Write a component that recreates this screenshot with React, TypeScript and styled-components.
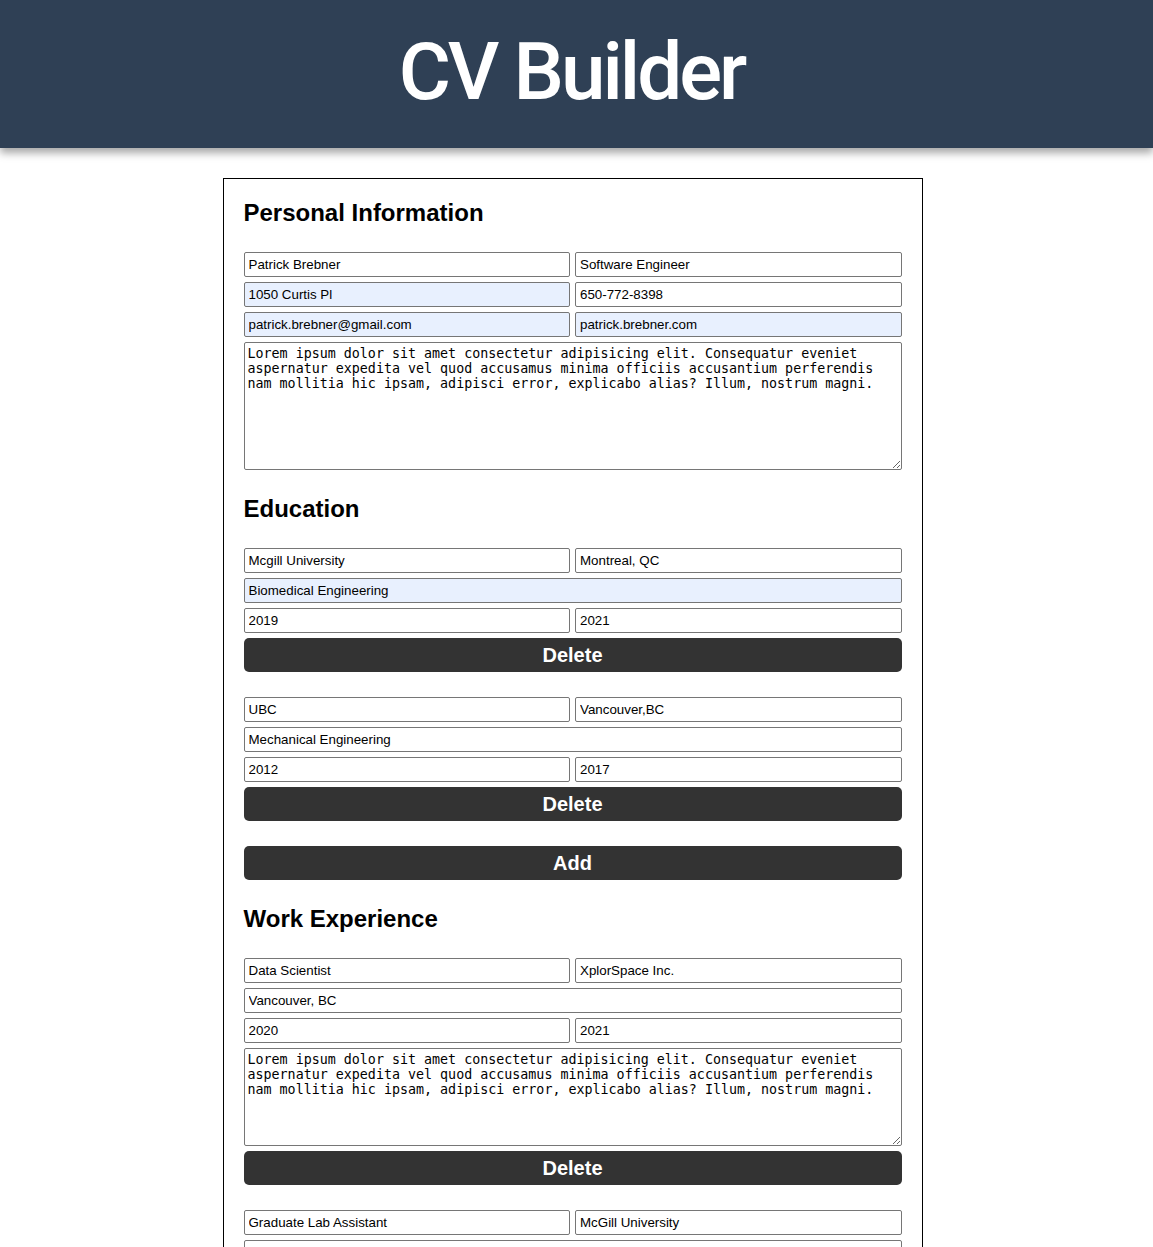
import {useState} from "react"
import styled, {createGlobalStyle} from "styled-components"

const LOREM =
  "Lorem ipsum dolor sit amet consectetur adipisicing elit. Consequatur eveniet aspernatur expedita vel quod accusamus minima officiis accusantium perferendis nam mollitia hic ipsam, adipisci error, explicabo alias? Illum, nostrum magni."

type Education = {school: string; city: string; degree: string; from: string; to: string}
type Work = {position: string; company: string; city: string; from: string; to: string; description: string}

const GlobalStyle = createGlobalStyle`
  body {
    margin: 0;
    font-family: "Liberation Sans", Arial, sans-serif;
    background: #fff;
    color: #000;
  }
  * {
    box-sizing: border-box;
  }
`

const Header = styled.header`
  height: 148px;
  background: #2f4055;
  display: flex;
  align-items: center;
  justify-content: center;
  padding-right: 10px;
  box-shadow: 0 5px 8px rgba(0, 0, 0, 0.35);
`

const Title = styled.h1`
  margin: 0 0 5px;
  font-family: Roboto, "Liberation Sans", sans-serif;
  font-weight: 500;
  font-size: 80px;
  color: #fff;
  letter-spacing: -3px;
`

const Card = styled.main`
  width: 700px;
  margin: 30px auto 30px calc(50% - 354px);
  border: 1px solid #000;
  padding: 20px;
  display: flex;
  flex-direction: column;
  gap: 25px;
`

const Section = styled.section`
  display: flex;
  flex-direction: column;
  gap: 25px;
`

const SectionTitle = styled.h2`
  margin: 0;
  font-size: 24px;
  font-weight: 700;
  line-height: 28px;
`

const FieldGrid = styled.div`
  display: grid;
  grid-template-columns: 1fr 1fr;
  gap: 5px;
`

const Input = styled.input<{$autofilled?: boolean; $wide?: boolean}>`
  height: 25px;
  border: 1px solid #767676;
  border-radius: 2px;
  padding: 1px 4px;
  font-family: "Liberation Sans", Arial, sans-serif;
  font-size: 13.33px;
  color: #000;
  background: ${(p) => (p.$autofilled ? "#e8f0fe" : "#fff")};
  grid-column: ${(p) => (p.$wide ? "1 / -1" : "auto")};
  outline: none;
`

const TextArea = styled.textarea<{$height: number}>`
  grid-column: 1 / -1;
  height: ${(p) => p.$height}px;
  border: 1px solid #767676;
  border-radius: 2px;
  padding: 3px 3px 2px;
  font-family: "DejaVu Sans Mono", "Liberation Mono", monospace;
  font-size: 13.33px;
  line-height: 15px;
  color: #000;
  resize: vertical;
  outline: none;
`

const ActionButton = styled.button`
  grid-column: 1 / -1;
  height: 34px;
  border: none;
  border-radius: 5px;
  background: #333;
  color: #fff;
  font-family: "Liberation Sans", Arial, sans-serif;
  font-size: 20px;
  font-weight: 700;
  cursor: pointer;
`

const EntryList = styled.div`
  display: flex;
  flex-direction: column;
  gap: 25px;
`

export default function App() {
  const [education, setEducation] = useState<Education[]>([
    {school: "Mcgill University", city: "Montreal, QC", degree: "Biomedical Engineering", from: "2019", to: "2021"},
    {school: "UBC", city: "Vancouver,BC", degree: "Mechanical Engineering", from: "2012", to: "2017"},
  ])
  const [work, setWork] = useState<Work[]>([
    {position: "Data Scientist", company: "XplorSpace Inc.", city: "Vancouver, BC", from: "2020", to: "2021", description: LOREM},
    {position: "Graduate Lab Assistant", company: "McGill University", city: "Montreal, QC", from: "2019", to: "2020", description: LOREM},
  ])

  function updateEducation(i: number, key: keyof Education, value: string) {
    setEducation((list) => list.map((e, j) => (j === i ? {...e, [key]: value} : e)))
  }

  function updateWork(i: number, key: keyof Work, value: string) {
    setWork((list) => list.map((w, j) => (j === i ? {...w, [key]: value} : w)))
  }

  return (
    <>
      <GlobalStyle />
      <Header>
        <Title>CV Builder</Title>
      </Header>
      <Card>
        <Section>
          <SectionTitle>Personal Information</SectionTitle>
          <FieldGrid>
            <Input defaultValue="Patrick Brebner" />
            <Input defaultValue="Software Engineer" />
            <Input $autofilled defaultValue="1050 Curtis Pl" />
            <Input defaultValue="650-772-8398" />
            <Input $autofilled defaultValue="patrick.brebner@gmail.com" />
            <Input $autofilled defaultValue="patrick.brebner.com" />
            <TextArea $height={128} defaultValue={LOREM} />
          </FieldGrid>
        </Section>

        <Section>
          <SectionTitle>Education</SectionTitle>
          <EntryList>
            {education.map((e, i) => (
              <FieldGrid key={i}>
                <Input value={e.school} onChange={(ev) => updateEducation(i, "school", ev.target.value)} />
                <Input value={e.city} onChange={(ev) => updateEducation(i, "city", ev.target.value)} />
                <Input
                  $wide
                  $autofilled={i === 0}
                  value={e.degree}
                  onChange={(ev) => updateEducation(i, "degree", ev.target.value)}
                />
                <Input value={e.from} onChange={(ev) => updateEducation(i, "from", ev.target.value)} />
                <Input value={e.to} onChange={(ev) => updateEducation(i, "to", ev.target.value)} />
                <ActionButton onClick={() => setEducation((list) => list.filter((_, j) => j !== i))}>Delete</ActionButton>
              </FieldGrid>
            ))}
            <ActionButton
              onClick={() => setEducation((list) => [...list, {school: "", city: "", degree: "", from: "", to: ""}])}
            >
              Add
            </ActionButton>
          </EntryList>
        </Section>

        <Section>
          <SectionTitle>Work Experience</SectionTitle>
          <EntryList>
            {work.map((w, i) => (
              <FieldGrid key={i}>
                <Input value={w.position} onChange={(ev) => updateWork(i, "position", ev.target.value)} />
                <Input value={w.company} onChange={(ev) => updateWork(i, "company", ev.target.value)} />
                <Input $wide value={w.city} onChange={(ev) => updateWork(i, "city", ev.target.value)} />
                <Input value={w.from} onChange={(ev) => updateWork(i, "from", ev.target.value)} />
                <Input value={w.to} onChange={(ev) => updateWork(i, "to", ev.target.value)} />
                <TextArea
                  $height={98}
                  value={w.description}
                  onChange={(ev) => updateWork(i, "description", ev.target.value)}
                />
                <ActionButton onClick={() => setWork((list) => list.filter((_, j) => j !== i))}>Delete</ActionButton>
              </FieldGrid>
            ))}
            <ActionButton
              onClick={() =>
                setWork((list) => [...list, {position: "", company: "", city: "", from: "", to: "", description: ""}])
              }
            >
              Add
            </ActionButton>
          </EntryList>
        </Section>
      </Card>
    </>
  )
}
